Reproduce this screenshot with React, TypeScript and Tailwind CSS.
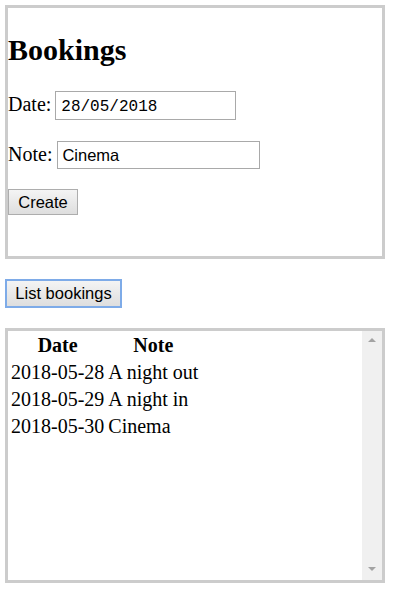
const bookings = [
  { date: "2018-05-28", note: "A night out" },
  { date: "2018-05-29", note: "A night in" },
  { date: "2018-05-30", note: "Cinema" },
];

export default function App() {
  return (
    <div className="min-h-[602px] bg-white pl-[5px] pt-[5px] font-['Liberation_Serif',serif] text-[20px] text-black">
      <div className="box-border h-[254px] w-[380px] border-[3px] border-[#cccccc]">
        <h2 className="mt-[25px] text-[30px] font-bold leading-[34px]">Bookings</h2>

        <div className="mt-[24px] flex items-baseline">
          <span className="leading-[23px]">Date:</span>
          <input
            readOnly
            value="28/05/2018"
            className="ml-[4px] box-border h-[29px] w-[181px] border border-[#a9a9a9] pl-[5px] pt-[3px] font-['Liberation_Mono',monospace] text-[16px] outline-none"
          />
        </div>

        <div className="mt-[21px] flex items-baseline">
          <span className="leading-[23px]">Note:</span>
          <input
            readOnly
            value="Cinema"
            className="ml-[5px] box-border h-[28px] w-[203px] border border-[#a9a9a9] py-0 pl-[4px] font-['Liberation_Sans',sans-serif] text-[16.5px] outline-none"
          />
        </div>

        <button className="mt-[20px] box-border flex h-[26px] w-[70px] items-center justify-center border border-[#adadad] bg-gradient-to-b from-[#f4f4f4] to-[#dedede] font-['Liberation_Sans',sans-serif] text-[16.5px]">
          Create
        </button>
      </div>

      <button className="mt-[20px] box-border flex h-[29px] w-[117px] items-center justify-center border-2 border-[#7eabe8] bg-gradient-to-b from-[#f4f4f4] to-[#dedede] font-['Liberation_Sans',sans-serif] text-[16.5px]">
        List bookings
      </button>

      <div className="mt-[20px] box-border flex h-[255px] w-[380px] border-[3px] border-[#cccccc]">
        <div className="flex-1">
          <table className="border-separate border-spacing-[2px] leading-[23px]">
            <thead>
              <tr>
                <th className="p-[1px] font-bold">Date</th>
                <th className="p-[1px] font-bold">Note</th>
              </tr>
            </thead>
            <tbody>
              {bookings.map((b) => (
                <tr key={b.date}>
                  <td className="p-[1px]">{b.date}</td>
                  <td className="p-[1px]">{b.note}</td>
                </tr>
              ))}
            </tbody>
          </table>
        </div>
        <div className="flex w-[20px] flex-col justify-between bg-[#f0f0f0]">
          <svg width="20" height="20" viewBox="0 0 20 20">
            <polygon points="6,11 14,11 10,7" fill="#a3a3a3" />
          </svg>
          <svg width="20" height="20" viewBox="0 0 20 20">
            <polygon points="6,7 14,7 10,11" fill="#a3a3a3" />
          </svg>
        </div>
      </div>
    </div>
  );
}
